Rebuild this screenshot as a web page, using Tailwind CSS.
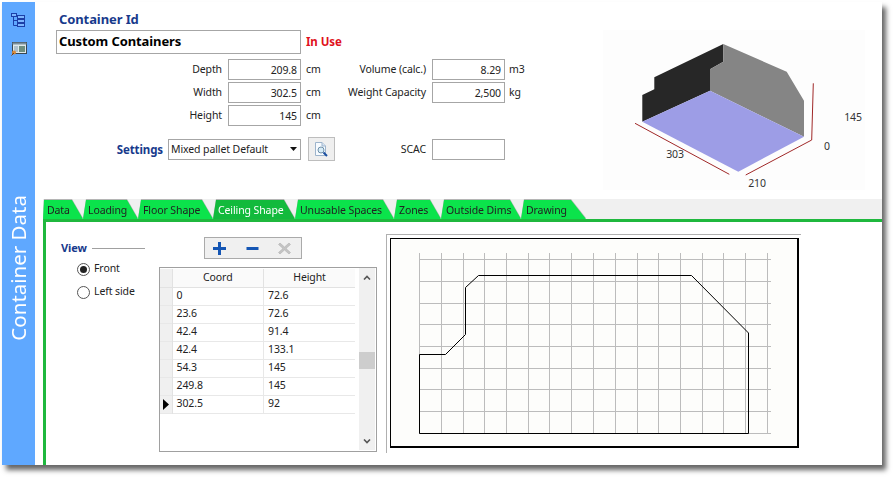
<!DOCTYPE html>
<html lang="en">
<head>
<meta charset="UTF-8" />
<title>Container Data</title>
<script src="https://cdn.jsdelivr.net/npm/@tailwindcss/browser@4"></script>
</head>
<body class="bg-white font-['Noto_Sans',sans-serif] text-[10.5px] tracking-[-0.1px] text-[#222]">

<div class="w-[894px] h-[479px] overflow-hidden pt-[2px] pl-[2px]">
  <div class="flex w-[880px] h-[463px] bg-white shadow-[4px_5px_5px_#666]">

    <!-- sidebar -->
    <aside class="w-[33px] shrink-0 bg-[#5fa8ff] flex flex-col items-center pb-[124px]">
      <svg class="mt-[10px] ml-[-2px]" width="16" height="16" viewBox="0 0 16 16" fill="#7db6ff" stroke="#1c3fa8">
        <rect x="1.5" y="1.5" width="5" height="3" />
        <path d="M3.5 4.5V13.5H7M3.5 8.5H7" fill="none" />
        <rect x="7.5" y="3.5" width="7" height="3" />
        <rect x="7.5" y="7.5" width="7" height="3" />
        <rect x="7.5" y="11.5" width="7" height="3" />
      </svg>
      <svg class="mt-[13px]" width="16" height="15" viewBox="0 0 16 15">
        <rect x="1.5" y="1.5" width="14" height="11" fill="#dfe8ea" stroke="#3a4650" />
        <rect x="1.5" y="1.5" width="14" height="2" fill="#7a8f9c" />
        <rect x="8" y="5" width="6" height="6" fill="#6f8f80" />
        <path d="M3 6H7M3 8H7M3 10H7" stroke="#7f9bb0" />
        <circle cx="3" cy="11.5" r="2" fill="#d98a3a" />
        <path d="M0.5 14.5L3 12" stroke="#7a3d10" />
      </svg>
      <span class="mt-auto mr-[1px] rotate-180 [writing-mode:vertical-rl] text-white text-[20.5px] tracking-normal leading-[24px] whitespace-nowrap">Container Data</span>
    </aside>

    <main class="flex-1 min-w-0 flex flex-col">

      <!-- top pane -->
      <section class="h-[197px] shrink-0 flex pl-[21px]">
        <div class="w-[547px] shrink-0 pt-[10px]">
          <div class="h-[18px] pl-[3px] leading-[14px] text-[13px] font-bold text-[#173a8c]">Container Id</div>
          <div class="flex items-center gap-[5px]">
            <input readonly value="Custom Containers" class="w-[245px] h-[24px] px-[2px] pb-[2px] border border-[#a6a6a6] bg-white text-[13px] font-bold text-black outline-none" />
            <span class="font-bold text-[11.5px] text-[#e01020]">In Use</span>
          </div>

          <div class="flex mt-[5px]">
            <div class="w-[270px] flex flex-col gap-[2px]">
              <div class="flex items-center h-[21px]">
                <label class="w-[166px] text-right">Depth</label>
                <input readonly value="209.8" class="ml-[6px] w-[73px] h-[21px] px-[3px] border border-[#a6a6a6] text-right outline-none" />
                <span class="ml-[5px]">cm</span>
              </div>
              <div class="flex items-center h-[21px]">
                <label class="w-[166px] text-right">Width</label>
                <input readonly value="302.5" class="ml-[6px] w-[73px] h-[21px] px-[3px] border border-[#a6a6a6] text-right outline-none" />
                <span class="ml-[5px]">cm</span>
              </div>
              <div class="flex items-center h-[21px]">
                <label class="w-[166px] text-right">Height</label>
                <input readonly value="145" class="ml-[6px] w-[73px] h-[21px] px-[3px] border border-[#a6a6a6] text-right outline-none" />
                <span class="ml-[5px]">cm</span>
              </div>
            </div>
            <div class="flex flex-col gap-[2px]">
              <div class="flex items-center h-[21px]">
                <label class="w-[100px] text-right whitespace-nowrap">Volume (calc.)</label>
                <input readonly value="8.29" class="ml-[6px] w-[73px] h-[21px] px-[3px] border border-[#a6a6a6] text-right outline-none" />
                <span class="ml-[4px]">m3</span>
              </div>
              <div class="flex items-center h-[21px]">
                <label class="w-[100px] text-right whitespace-nowrap">Weight Capacity</label>
                <input readonly value="2,500" class="ml-[6px] w-[73px] h-[21px] px-[3px] border border-[#a6a6a6] text-right outline-none" />
                <span class="ml-[4px]">kg</span>
              </div>
            </div>
          </div>

          <div class="flex items-center mt-[11px] h-[24px]">
            <label class="w-[107px] pt-[1px] text-right text-[11.5px] font-bold text-[#173a8c]">Settings</label>
            <div class="ml-[5px] w-[133px] h-[21px] flex items-center justify-between px-[2px] pr-[3px] border border-[#a6a6a6]">
              <span class="pt-[1px]">Mixed pallet Default</span>
              <svg width="7" height="4" viewBox="0 0 7 4"><path d="M0 0H7L3.5 4Z" fill="#111" /></svg>
            </div>
            <button class="ml-[7px] w-[27px] h-[24px] flex items-center justify-center bg-[#efefef] border border-[#bdbdbd]">
              <svg width="17" height="17" viewBox="0 0 17 17">
                <path d="M2.5 1.5H9L12.5 5V14.5H2.5Z" fill="#f7fbff" stroke="#9db4cc" />
                <path d="M9 1.5V5H12.5" fill="#d8e6f4" stroke="#9db4cc" />
                <circle cx="8" cy="9" r="3" fill="#d7ecf8" stroke="#6f8fa8" />
                <path d="M10.5 11.5L14 15" stroke="#1c4fa0" stroke-width="2" />
              </svg>
            </button>
            <label class="w-[91px] pt-[1px] text-right">SCAC</label>
            <input readonly class="ml-[6px] w-[73px] h-[21px] border border-[#a6a6a6] outline-none" />
          </div>
        </div>

        <!-- 3D preview -->
        <svg class="mt-[28px] bg-[#fdfdfd]" width="262" height="160" viewBox="603 30 262 160">
          <polygon points="642.3,95 654.3,89.3 654.3,77.3 723.3,44 723.3,61.7 710,69.3 710,90.7 642.3,121.7" fill="#272727" />
          <polygon points="723.3,44 786.7,71.7 804,100.7 804,136.7 710,90.7 710,69.3 723.3,61.7" fill="#858585" />
          <polygon points="710,90.7 804,136.7 738.3,171.7 642.3,121.7" fill="#9d9de6" />
          <path d="M635 123.3L729.3 174.3M745.7 175L811.7 140L813.3 83.3" fill="none" stroke="#a02828" />
          <text x="675" y="158" text-anchor="middle" font-size="10.5" fill="#333">303</text>
          <text x="757" y="187" text-anchor="middle" font-size="10.5" fill="#333">210</text>
          <text x="827" y="150" text-anchor="middle" font-size="10.5" fill="#333">0</text>
          <text x="853" y="121" text-anchor="middle" font-size="10.5" fill="#333">145</text>
        </svg>
      </section>

      <!-- tab strip -->
      <nav class="ml-[8px] h-[20px] shrink-0 pt-[1px] bg-[#f0f0f0] leading-[20px]">
        <div class="flex h-[19px] [filter:drop-shadow(0_-1px_0_#b5b5b5)]">
          <div class="w-[40px] pl-[4px] bg-[#0be34b] [clip-path:polygon(1px_0,calc(100%_-_11px)_0,100%_100%,0_100%)]">Data</div>
          <div class="w-[55px] pl-[5px] bg-[#0be34b] [clip-path:polygon(3px_0,calc(100%_-_11px)_0,100%_100%,0_100%)]">Loading</div>
          <div class="w-[75px] pl-[5px] bg-[#0be34b] [clip-path:polygon(3px_0,calc(100%_-_11px)_0,100%_100%,0_100%)]">Floor Shape</div>
          <div class="w-[82px] pl-[5px] bg-[#12ba3c] text-white [clip-path:polygon(3px_0,calc(100%_-_11px)_0,100%_100%,0_100%)]">Ceiling Shape</div>
          <div class="w-[99px] pl-[5px] bg-[#0be34b] [clip-path:polygon(3px_0,calc(100%_-_11px)_0,100%_100%,0_100%)]">Unusable Spaces</div>
          <div class="w-[47px] pl-[5px] bg-[#0be34b] [clip-path:polygon(3px_0,calc(100%_-_11px)_0,100%_100%,0_100%)]">Zones</div>
          <div class="w-[80px] pl-[5px] bg-[#0be34b] [clip-path:polygon(3px_0,calc(100%_-_11px)_0,100%_100%,0_100%)]">Outside Dims</div>
          <div class="w-[65px] pl-[5px] bg-[#0be34b] [clip-path:polygon(3px_0,calc(100%_-_15px)_0,100%_100%,0_100%)]">Drawing</div>
        </div>
      </nav>
      <div class="ml-[8px] h-[3px] shrink-0 bg-[#1fb83e]"></div>

      <!-- tab body -->
      <section class="ml-[8px] flex-1 min-h-0 flex border-l-[3px] border-[#1fb83e]">

        <div class="w-[113px] shrink-0 pt-[18px]">
          <div class="flex items-center pl-[15px] pr-[14px] h-[16px]">
            <span class="font-bold text-[11px] text-[#173a8c]">View</span>
            <span class="flex-1 ml-[5px] h-px bg-[#a0a0a0]"></span>
          </div>
          <div class="mt-[4px] pl-[31px] flex flex-col gap-[5px]">
            <div class="flex items-center h-[18px]">
              <span class="w-[13px] h-[13px] rounded-full border border-[#555] flex items-center justify-center"><span class="w-[7px] h-[7px] rounded-full bg-[#222]"></span></span>
              <span class="ml-[4px]">Front</span>
            </div>
            <div class="flex items-center h-[18px]">
              <span class="w-[13px] h-[13px] rounded-full border border-[#555]"></span>
              <span class="ml-[4px]">Left side</span>
            </div>
          </div>
        </div>

        <div class="w-[218px] shrink-0 pt-[15px]">
          <div class="ml-[45px] w-[98px] h-[22px] flex items-center bg-[#f0f0f0] border border-[#aaa]">
            <svg class="ml-[8px]" width="13" height="13" viewBox="0 0 13 13"><path d="M5 0H8V5H13V8H8V13H5V8H0V5H5Z" fill="#1556b4" /></svg>
            <svg class="ml-[20px]" width="13" height="13" viewBox="0 0 13 13"><rect x="0.5" y="5" width="12" height="3" fill="#1556b4" /></svg>
            <svg class="ml-[19px]" width="13" height="13" viewBox="0 0 13 13"><path d="M2 1L6.5 5L11 1L12.5 2.5L8 6.5L12.5 10.5L11 12L6.5 8L2 12L0.5 10.5L5 6.5L0.5 2.5Z" fill="#c4c4c4" stroke="#a8a8a8" stroke-width="0.5" /></svg>
          </div>
          <div class="relative mt-[8px] h-[185px] border border-[#a0a0a0] bg-white">
            <table class="mt-[1px] table-fixed border-collapse w-[195px]">
              <colgroup><col class="w-[12px]" /><col class="w-[91px]" /><col class="w-[91px]" /></colgroup>
              <thead>
                <tr class="h-[18px] bg-[#fafafa] border-b border-[#e2e2e2]">
                  <th class="bg-[#f0f0f0] border-r border-[#e2e2e2]"></th>
                  <th class="font-normal border-r border-[#e2e2e2]">Coord</th>
                  <th class="font-normal">Height</th>
                </tr>
              </thead>
              <tbody>
                <tr class="h-[18px] border-b border-[#e8e8e8]"><td class="bg-[#f0f0f0] border-r border-[#e2e2e2]"></td><td class="pl-[4px] border-r border-[#e8e8e8]">0</td><td class="pl-[4px]">72.6</td></tr>
                <tr class="h-[18px] border-b border-[#e8e8e8]"><td class="bg-[#f0f0f0] border-r border-[#e2e2e2]"></td><td class="pl-[4px] border-r border-[#e8e8e8]">23.6</td><td class="pl-[4px]">72.6</td></tr>
                <tr class="h-[18px] border-b border-[#e8e8e8]"><td class="bg-[#f0f0f0] border-r border-[#e2e2e2]"></td><td class="pl-[4px] border-r border-[#e8e8e8]">42.4</td><td class="pl-[4px]">91.4</td></tr>
                <tr class="h-[18px] border-b border-[#e8e8e8]"><td class="bg-[#f0f0f0] border-r border-[#e2e2e2]"></td><td class="pl-[4px] border-r border-[#e8e8e8]">42.4</td><td class="pl-[4px]">133.1</td></tr>
                <tr class="h-[18px] border-b border-[#e8e8e8]"><td class="bg-[#f0f0f0] border-r border-[#e2e2e2]"></td><td class="pl-[4px] border-r border-[#e8e8e8]">54.3</td><td class="pl-[4px]">145</td></tr>
                <tr class="h-[18px] border-b border-[#e8e8e8]"><td class="bg-[#f0f0f0] border-r border-[#e2e2e2]"></td><td class="pl-[4px] border-r border-[#e8e8e8]">249.8</td><td class="pl-[4px]">145</td></tr>
                <tr class="h-[18px] border-b border-[#e8e8e8]">
                  <td class="bg-[#f0f0f0] border-r border-[#e2e2e2] pl-[3px]"><svg class="block" width="7" height="11" viewBox="0 0 7 11"><path d="M0 0L6 5.5L0 11Z" fill="#000" /></svg></td>
                  <td class="pl-[4px] border-r border-[#e8e8e8]">302.5</td><td class="pl-[4px]">92</td>
                </tr>
              </tbody>
            </table>
            <!-- scrollbar -->
            <div class="absolute top-0 right-[1px] bottom-[1px] w-[16px] bg-[#f0f0f0] flex flex-col items-center">
              <svg class="mt-[7px]" width="8" height="5" viewBox="0 0 8 5"><path d="M1 4.5L4 1.5L7 4.5" fill="none" stroke="#555" stroke-width="1.6" /></svg>
              <div class="mt-[72px] w-full h-[17px] bg-[#cdcdcd]"></div>
              <svg class="mt-auto mb-[6px]" width="8" height="5" viewBox="0 0 8 5"><path d="M1 0.5L4 3.5L7 0.5" fill="none" stroke="#555" stroke-width="1.6" /></svg>
            </div>
          </div>
        </div>

        <!-- ceiling drawing -->
        <div class="ml-[9px] pt-[12px]">
          <div class="w-[415px] h-[219px] pt-[3px] pl-[3px] border-t border-l border-[#b0b0b0]">
            <div class="w-[409px] h-[210px] bg-[#fdfdfb] border-t border-l border-r-2 border-b-2 border-black">
              <svg class="block" width="406" height="207" viewBox="391 239 406 207">
                <path fill="none" stroke="#bcbcbc" shape-rendering="crispEdges" d="M419.5 253V433M441.5 253V433M463.5 253V433M484.5 253V433M506.5 253V433M528.5 253V433M549.5 253V433M571.5 253V433M593.5 253V433M615.5 253V433M637.5 253V433M658.5 253V433M680.5 253V433M702.5 253V433M723.5 253V433M745.5 253V433M767.5 253V433M419 259.5H771M419 281.5H771M419 303.5H771M419 324.5H771M419 346.5H771M419 368.5H771M419 389.5H771M419 411.5H771M419 433.5H771" />
                <path fill="none" stroke="#000" d="M419.5 433.5V354.5H445.5L465.5 334.5V287.5L478.5 275.5H691.5L748.5 333V433.5Z" />
              </svg>
            </div>
          </div>
        </div>
      </section>
    </main>
  </div>
</div>
</body>
</html>
